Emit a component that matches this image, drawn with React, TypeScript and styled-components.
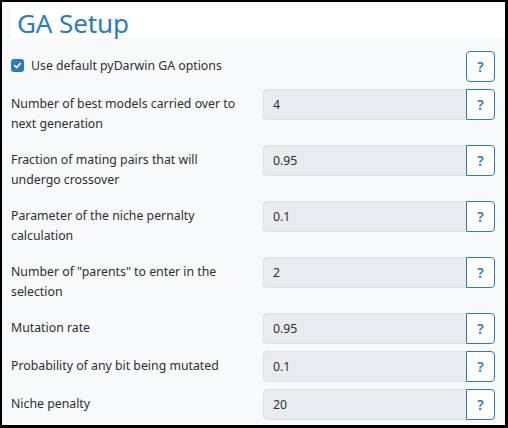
import styled, { createGlobalStyle } from "styled-components";

const GlobalStyle = createGlobalStyle`
  html, body {
    margin: 0;
    padding: 0;
    background: #000;
  }
  body {
    font-family: "Noto Sans", "Open Sans", sans-serif;
    color: #2b2f33;
  }
`;

interface Field {
  label: string;
  value: string;
}

const fields: Field[] = [
  { label: "Number of best models carried over to next generation", value: "4" },
  { label: "Fraction of mating pairs that will undergo crossover", value: "0.95" },
  { label: "Parameter of the niche pernalty calculation", value: "0.1" },
  { label: 'Number of "parents" to enter in the selection', value: "2" },
  { label: "Mutation rate", value: "0.95" },
  { label: "Probability of any bit being mutated", value: "0.1" },
  { label: "Niche penalty", value: "20" },
];

export default function App() {
  return (
    <>
      <GlobalStyle />
      <Frame>
        <TitleBar>
          <Title>GA Setup</Title>
        </TitleBar>
        <Form>
          <Row>
            <CheckLabel>
              <CheckBox>
                <svg width="9" height="9" viewBox="0 0 10 10">
                  <path
                    d="M2 5.2 L4.2 7.3 L8 2.8"
                    fill="none"
                    stroke="#fff"
                    strokeWidth="1.8"
                    strokeLinecap="round"
                    strokeLinejoin="round"
                  />
                </svg>
              </CheckBox>
              Use default pyDarwin GA options
            </CheckLabel>
            <InputGroup>
              <Spacer />
              <HelpButton $solo>?</HelpButton>
            </InputGroup>
          </Row>
          {fields.map((f) => (
            <Row key={f.label}>
              <FieldLabel>{f.label}</FieldLabel>
              <InputGroup>
                <ValueBox>{f.value}</ValueBox>
                <HelpButton>?</HelpButton>
              </InputGroup>
            </Row>
          ))}
        </Form>
      </Frame>
    </>
  );
}

const Frame = styled.div`
  box-sizing: border-box;
  width: 508px;
  height: 428px;
  margin: 0;
  background: #f8f9fa;
  border: 2px solid #000;
  border-right-width: 3px;
  border-bottom-width: 3px;
  padding: 6px 0 0 9px;
  display: flex;
  flex-direction: column;
  overflow: hidden;
`;

const TitleBar = styled.div`
  background: #fff;
  height: 30px;
  display: flex;
  align-items: center;
  padding-left: 6px;
`;

const Title = styled.h1`
  margin: 0;
  font-size: 26px;
  font-weight: 400;
  color: #2a7bbf;
  line-height: 30px;
  letter-spacing: -0.1px;
`;

const Form = styled.div`
  margin-top: 13px;
  padding-right: 10px;
  display: flex;
  flex-direction: column;
  gap: 7px;
`;

const Row = styled.div`
  display: grid;
  grid-template-columns: 1fr 232px;
  column-gap: 12px;
  align-items: start;
`;

const FieldLabel = styled.div`
  font-size: 12.3px;
  line-height: 19.5px;
  padding: 5px 5px 5px 0;
`;

const CheckLabel = styled.label`
  display: flex;
  align-items: center;
  gap: 7px;
  font-size: 12.3px;
  line-height: 19.5px;
  padding: 5px 0;
`;

const CheckBox = styled.span`
  width: 13px;
  height: 13px;
  border-radius: 3px;
  background: #2a7bbf;
  display: inline-flex;
  align-items: center;
  justify-content: center;
`;

const InputGroup = styled.div`
  display: flex;
  height: 31px;
`;

const Spacer = styled.div`
  flex: 1;
`;

const ValueBox = styled.div`
  flex: 1;
  box-sizing: border-box;
  background: #e9ecef;
  border: 1px solid #dee2e6;
  border-right: none;
  border-radius: 4px 0 0 4px;
  padding: 0 9px;
  font-size: 12.3px;
  display: flex;
  align-items: center;
`;

const HelpButton = styled.button<{ $solo?: boolean }>`
  box-sizing: border-box;
  width: 29px;
  height: 31px;
  padding: 0 0 1px;
  border: 1px solid #2a7bbf;
  border-radius: ${(p) => (p.$solo ? "4px" : "0 4px 4px 0")};
  background: #fff;
  color: #2a7bbf;
  font-family: "Noto Sans", sans-serif;
  font-size: 14px;
  font-weight: 600;
  display: flex;
  align-items: center;
  justify-content: center;
`;
